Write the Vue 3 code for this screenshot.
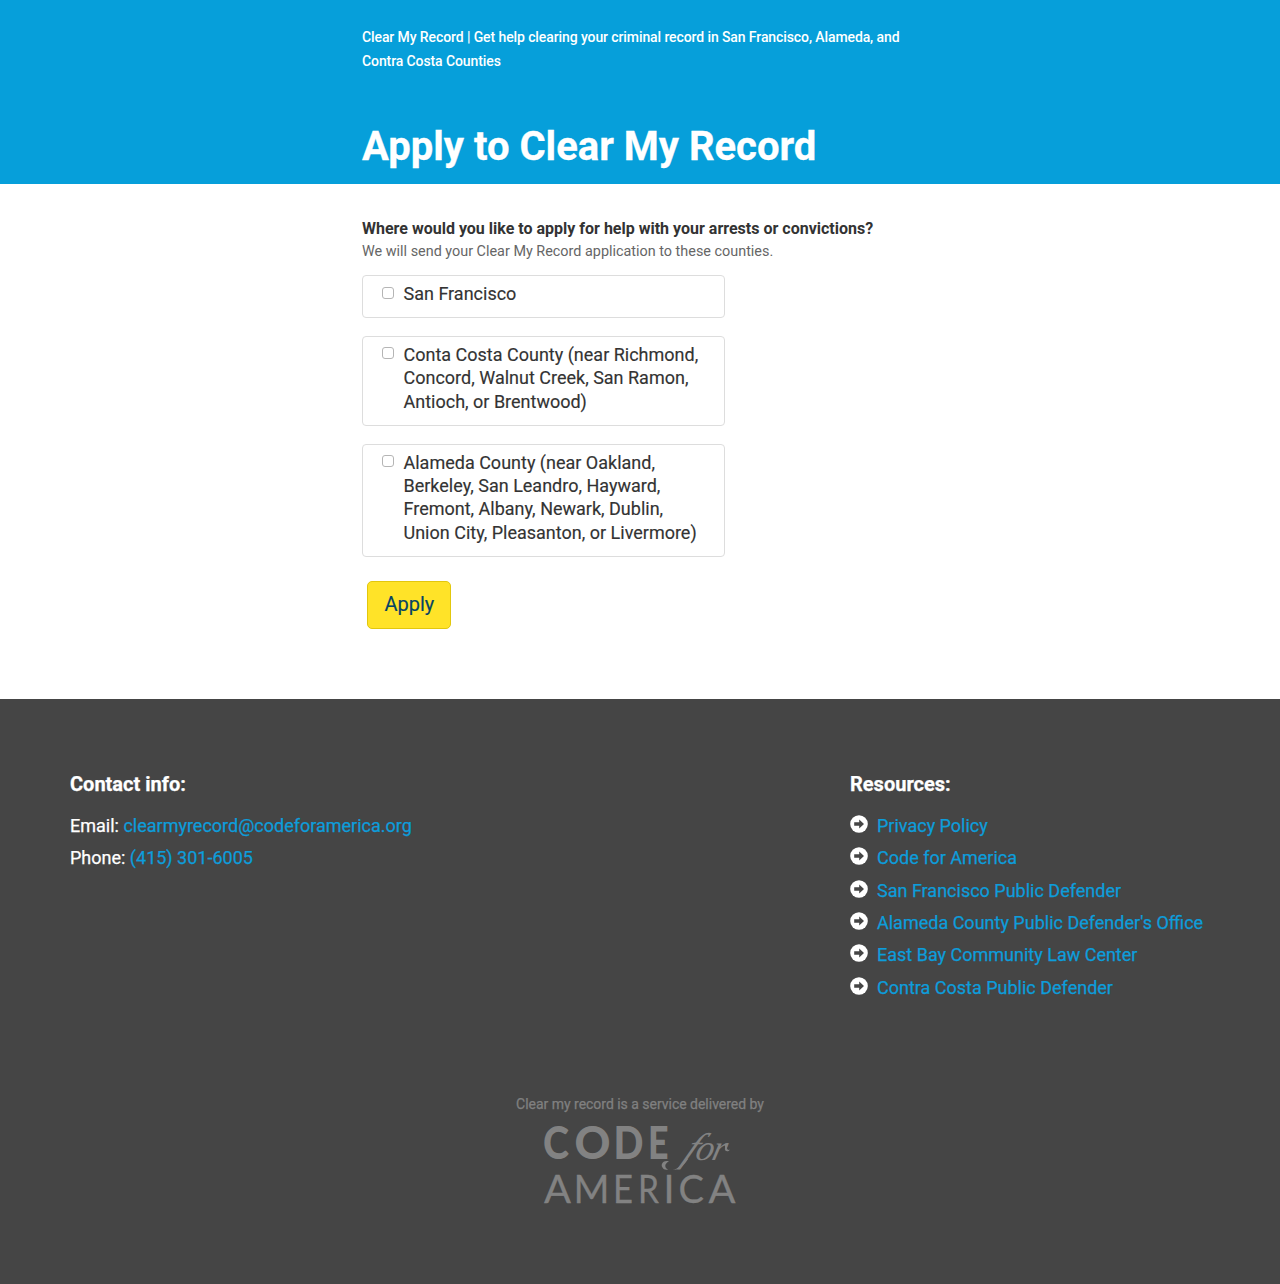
<script setup>
const counties = [
  { id: 'sf', lines: ['San Francisco'] },
  { id: 'cc', lines: ['Conta Costa County (near Richmond,', 'Concord, Walnut Creek, San Ramon,', 'Antioch, or Brentwood)'] },
  { id: 'al', lines: ['Alameda County (near Oakland,', 'Berkeley, San Leandro, Hayward,', 'Fremont, Albany, Newark, Dublin,', 'Union City, Pleasanton, or Livermore)'] }
]
const resources = [
  'Privacy Policy',
  'Code for America',
  'San Francisco Public Defender',
  "Alameda County Public Defender's Office",
  'East Bay Community Law Center',
  'Contra Costa Public Defender'
]
const codeLetters = [
  { c: 'C', x: 0, w: 26 },
  { c: 'O', x: 31.5, w: 36 },
  { c: 'D', x: 70.5, w: 30 },
  { c: 'E', x: 105, w: 20.5 }
]
const americaLetters = [
  { c: 'A', x: 1, w: 27 },
  { c: 'M', x: 30.5, w: 36 },
  { c: 'E', x: 70, w: 20 },
  { c: 'R', x: 95, w: 21 },
  { c: 'I', x: 120.5, w: 11 },
  { c: 'C', x: 135.5, w: 25.5 },
  { c: 'A', x: 165.5, w: 27 }
]
</script>

<template>
  <div class="page">
    <header class="top">
      <div class="column">
        <p class="tagline">Clear My Record | Get help clearing your criminal record in San Francisco, Alameda, and<br>Contra Costa Counties</p>
        <h1>Apply to Clear My Record</h1>
      </div>
    </header>
    <main class="column">
      <h2 class="question">Where would you like to apply for help with your arrests or convictions?</h2>
      <p class="help">We will send your Clear My Record application to these counties.</p>
      <label v-for="c in counties" :key="c.id" class="option">
        <input type="checkbox">
        <span class="option-text"><span v-for="l in c.lines" :key="l" class="line">{{ l }}</span></span>
      </label>
      <button class="apply" type="button">Apply</button>
    </main>
    <footer>
      <div class="footer-columns">
        <section class="contact">
          <h3>Contact info:</h3>
          <p class="email">Email: <a>clearmyrecord@codeforamerica.org</a></p>
          <p class="phone">Phone: <a>(415) 301-6005</a></p>
        </section>
        <section class="resources">
          <h3>Resources:</h3>
          <ul>
            <li v-for="r in resources" :key="r">
              <svg class="arrow" viewBox="0 0 18 18" width="18" height="18">
                <circle cx="9" cy="9" r="8.8" fill="#fff" />
                <path d="M4.2 7.2H9.2V4.6L14 9L9.2 13.4V10.8H4.2Z" fill="#454545" />
              </svg>
              <a>{{ r }}</a>
            </li>
          </ul>
        </section>
      </div>
      <div class="delivered">
        <p>Clear my record is a service delivered by</p>
        <svg class="logo" width="194" height="82" viewBox="0 0 194 82">
          <g class="code">
            <text v-for="l in codeLetters" :key="l.c" :x="l.x" y="35" :textLength="l.w" lengthAdjust="spacingAndGlyphs">{{ l.c }}</text>
          </g>
          <g class="for">
            <text class="f" transform="translate(138 36.5) skewX(-28)">f</text>
            <path d="M126 37.5C121 35.5 117 40 119.5 43.5C120.5 45.5 122.5 46 125 45.5C121.5 44 121 39.5 126 37.5Z" />
            <path d="M129.5 46C136 45 139 40 143 34L145 35C141 41 137 46 129.5 46Z" />
            <text transform="translate(151 35.5) skewX(-14)">o</text>
            <text transform="translate(167.5 35.5) skewX(-14)">r</text>
            <path d="M182 20C184 19 185 22 184 24C184 26 186 26.5 187 25.5C185 29 181 27 182 24Z" />
          </g>
          <g class="america">
            <text v-for="l in americaLetters" :key="l.x" :x="l.x" y="79" :textLength="l.w" lengthAdjust="spacingAndGlyphs">{{ l.c }}</text>
          </g>
        </svg>
      </div>
    </footer>
  </div>
</template>

<style>
body { margin: 0; background: #fff; }
</style>

<style scoped>
.page { font-family: Roboto, sans-serif; color: #333; font-size: 18px; }
h1, h2, h3, p, ul { margin: 0; padding: 0; }
.top { height: 184px; background: #069fda; color: #fff; overflow: hidden; }
.column { width: 556px; margin-left: 362px; white-space: nowrap; }
.tagline { padding-top: 25px; font-size: 14px; line-height: 24px; font-weight: 500; letter-spacing: -.1px; }
h1 { margin-top: 51px; font-size: 40px; line-height: 46px; font-weight: 700; -webkit-text-stroke: .3px; }
main { height: 515px; display: flex; flex-direction: column; align-items: flex-start; }
.question { margin-top: 34px; font-size: 16px; line-height: 22px; font-weight: 700; }
.help { padding-top: 1px; font-size: 14.4px; line-height: 22px; color: #666; }
.option { display: flex; align-items: flex-start; box-sizing: border-box; width: 362.5px; padding: 6px 18px 11.4px 19px; border: 1px solid #ddd; border-radius: 4px; margin: 13px 0 5px; line-height: 23.4px; color: #333; -webkit-text-stroke: .15px; }
.help + .option { margin-top: 12.2px; }
.line { display: block; }
.option input { appearance: none; flex: none; box-sizing: border-box; width: 12px; height: 12px; margin: 4.4px 9.5px 0 0; border: 1px solid #b5b5b5; border-radius: 3px; background: #fff; }
.apply { margin: 19px 0 0 5.4px; box-sizing: border-box; width: 84px; height: 48.5px; padding: 0 0 1px; font: 20px Roboto, sans-serif; color: #074464; background: #ffe328; border: 1px solid #e2c70d; border-radius: 5px; -webkit-text-stroke: .15px; }
footer { box-sizing: border-box; height: 585px; padding-top: 70px; background: #454545; color: #fff; -webkit-text-stroke: .25px; }
.footer-columns { display: flex; height: 323px; padding-left: 70px; }
.contact { width: 780px; }
h3 { font-size: 20px; line-height: 30px; font-weight: 700; margin-bottom: 11px; }
footer p, li { line-height: 32.35px; font-size: 18px; }
a { color: #0d9ddb; }
li { display: flex; list-style: none; white-space: nowrap; }
.arrow { flex: none; margin: 5px 9px 0 0; }
.delivered { display: flex; flex-direction: column; align-items: center; color: #808080; }
.delivered p { font-size: 14px; line-height: 24px; letter-spacing: -.02px; }
.logo { margin-top: 8px; fill: #828282; overflow: visible; -webkit-text-stroke: 0; }
.code { font: 900 46px Lato, sans-serif; }
.america { font: 400 39.5px Lato, sans-serif; stroke: #828282; stroke-width: .3px; }
.for { font: italic 36px "Liberation Serif", serif; }
.f { font-size: 40px; }
</style>
